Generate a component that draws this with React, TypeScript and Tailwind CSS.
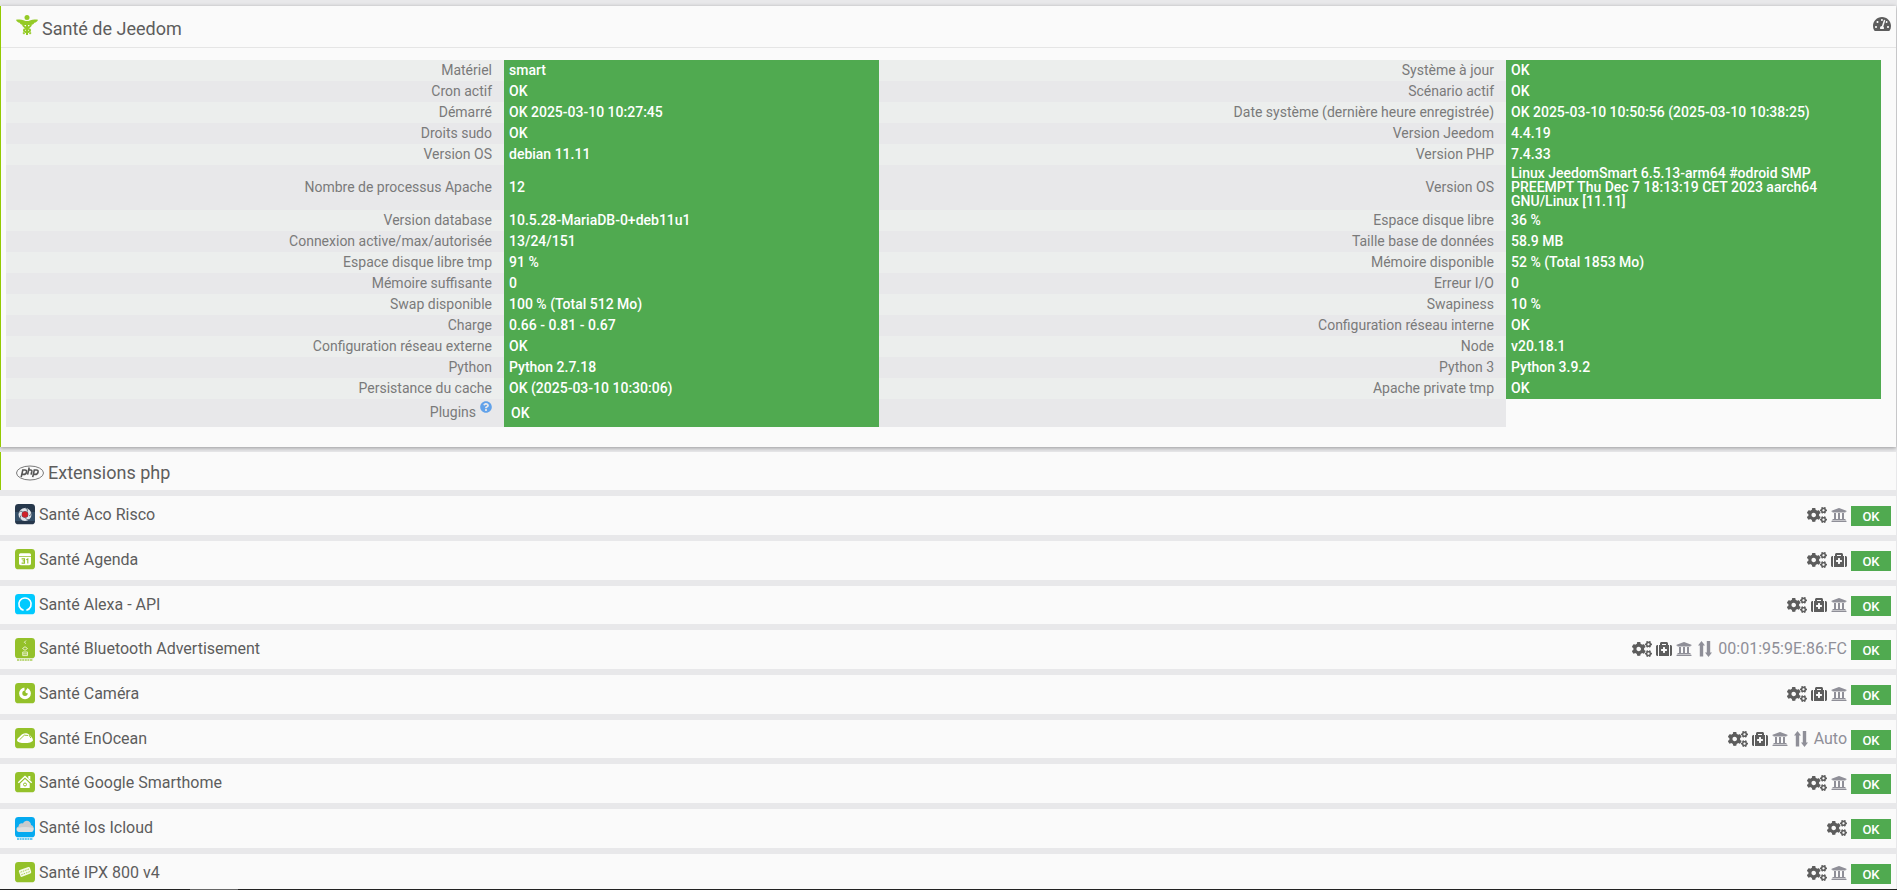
import type { ReactNode } from "react";
import { FaCogs, FaMedkit, FaUniversity, FaTachometerAlt, FaQuestionCircle } from "react-icons/fa";

type Cell = { label: string; value: string };

const checks: [Cell, Cell][] = [
  [{ label: "Matériel", value: "smart" }, { label: "Système à jour", value: "OK" }],
  [{ label: "Cron actif", value: "OK" }, { label: "Scénario actif", value: "OK" }],
  [
    { label: "Démarré", value: "OK 2025-03-10 10:27:45" },
    { label: "Date système (dernière heure enregistrée)", value: "OK 2025-03-10 10:50:56 (2025-03-10 10:38:25)" },
  ],
  [{ label: "Droits sudo", value: "OK" }, { label: "Version Jeedom", value: "4.4.19" }],
  [{ label: "Version OS", value: "debian 11.11" }, { label: "Version PHP", value: "7.4.33" }],
  [
    { label: "Nombre de processus Apache", value: "12" },
    {
      label: "Version OS",
      value: "Linux JeedomSmart 6.5.13-arm64 #odroid SMP PREEMPT Thu Dec 7 18:13:19 CET 2023 aarch64 GNU/Linux [11.11]",
    },
  ],
  [{ label: "Version database", value: "10.5.28-MariaDB-0+deb11u1" }, { label: "Espace disque libre", value: "36 %" }],
  [{ label: "Connexion active/max/autorisée", value: "13/24/151" }, { label: "Taille base de données", value: "58.9 MB" }],
  [{ label: "Espace disque libre tmp", value: "91 %" }, { label: "Mémoire disponible", value: "52 % (Total 1853 Mo)" }],
  [{ label: "Mémoire suffisante", value: "0" }, { label: "Erreur I/O", value: "0" }],
  [{ label: "Swap disponible", value: "100 % (Total 512 Mo)" }, { label: "Swapiness", value: "10 %" }],
  [{ label: "Charge", value: "0.66 - 0.81 - 0.67" }, { label: "Configuration réseau interne", value: "OK" }],
  [{ label: "Configuration réseau externe", value: "OK" }, { label: "Node", value: "v20.18.1" }],
  [{ label: "Python", value: "Python 2.7.18" }, { label: "Python 3", value: "Python 3.9.2" }],
  [{ label: "Persistance du cache", value: "OK (2025-03-10 10:30:06)" }, { label: "Apache private tmp", value: "OK" }],
];

function Caduceus() {
  return (
    <svg viewBox="0 0 22 20" className="h-5 w-[22px] shrink-0 fill-[#94ca26]" aria-hidden="true">
      <circle cx="11" cy="2.5" r="2.5" />
      <path d="M0 4.800c3-.6 5.500-.5 7.500.4L11 6.500l3.500-1.300c2-.9 4.500-1 7.500-.4-.6 1.700-2 2.800-3.600 3-.8 1.500-2.400 2.300-4.400 2.200H8C6 10.100 4.400 9.300 3.600 7.800 2 7.600.6 6.500 0 4.800z" />
      <path d="M10 6h2v14h-2z" />
      <path
        d="M7.200 9.500c-.6 3.800 6.800 3 6.800 5.700 0 1.500-1.600 2-4 2.300M14.800 9.500c.6 3.800-6.800 3-6.800 5.700 0 1.500 1.600 2 4 2.300"
        fill="none"
        stroke="#94ca26"
        strokeWidth="2"
      />
      <path d="M7 17.500l1.500 1.500M15 17.500L13.500 19" stroke="#94ca26" strokeWidth="1.500" />
    </svg>
  );
}

function PhpLogo() {
  return (
    <svg viewBox="0 0 28 16" className="h-4 w-7 shrink-0" aria-hidden="true">
      <ellipse cx="14" cy="8" rx="13.500" ry="7" fill="none" stroke="#6a6a6a" strokeWidth=".9" />
      <g fill="none" stroke="#555" strokeWidth="1.600">
        <path d="M5.200 12.200L6.800 5h2q2.200 0 1.700 2.200T7.700 9.400H6" />
        <path d="M13.200 2.500L11.600 9.600M12.700 5h1.900q1.500 0 1.200 1.500l-.7 3.100" />
        <path d="M16.700 12.200L18.300 5h2q2.200 0 1.700 2.200t-2.800 2.200H17.500" />
      </g>
    </svg>
  );
}

function Tile({ color, children, tag }: { color: string; children: ReactNode; tag?: string }) {
  return (
    <svg viewBox="0 0 20 24" className="h-6 w-5 shrink-0" aria-hidden="true">
      <rect width="20" height="20.300" rx="3.400" fill={color} />
      {children}
      {tag && <path d="M2 22h16" stroke={tag} strokeWidth="1.800" strokeDasharray="2 .6" opacity=".6" />}
    </svg>
  );
}

const GREEN = "#94c12a";

const tiles = {
  aco: (
    <Tile color="#26374b">
      <rect y="8" width="20" height="9" fill="#4a6d8c" opacity=".45" />
      <circle cx="10" cy="10.500" r="4.900" fill="none" stroke="#dfe3e8" strokeWidth="3.200" />
      <path
        d="M10 3.500q3 1 2.500 4M16.500 8q.5 3-2.500 4M14.500 15.500q-3 1.200-4-1.500M6 16q-2-2 0-4.500M3.500 9q1.500-3 4-1.500"
        fill="none"
        stroke="#4b5a6b"
        strokeWidth=".8"
      />
      <circle cx="10" cy="10.500" r="3" fill="#cf2229" />
    </Tile>
  ),
  agenda: (
    <Tile color={GREEN}>
      <path d="M4 7.200V5.800q0-1.500 1.500-1.500h9q1.500 0 1.500 1.500v1.400zM4 8h12v6.500q0 1.800-1.800 1.800H5.800Q4 16.300 4 14.500z" fill="#fff" />
      <path d="M6.600 9.900h2.900v2H7.600M9.500 11.900v2.200H6.600M11.300 10.700l1.500-.8v4.700" fill="none" stroke={GREEN} strokeWidth="1.100" />
    </Tile>
  ),
  alexa: (
    <Tile color="#00caff">
      <path d="M8.600 16.200A6.200 6.200 0 1 1 11.400 16.200" fill="none" stroke="#fff" strokeWidth="1.600" />
    </Tile>
  ),
  bluetooth: (
    <Tile color={GREEN} tag={GREEN}>
      <path
        d="M11 2.500L9.300 4.300 11 5.600M7.500 10.500L10 8.700l2.500 1.800-2.500 1.800zM7.700 14h4.800v3.600H7.700zM8 15.900h4.500"
        fill="none"
        stroke="#e4f0c4"
        strokeWidth="1"
      />
    </Tile>
  ),
  camera: (
    <Tile color={GREEN}>
      <circle cx="10" cy="10.300" r="4.300" fill="none" stroke="#fff" strokeWidth="3.200" />
      <path d="M9.800 10.300L9.300 3l4 .2z" fill={GREEN} />
      <circle cx="12.300" cy="8.400" r="1.900" fill="#fff" />
    </Tile>
  ),
  enocean: (
    <Tile color={GREEN}>
      <path d="M2 12.500C2 10.500 4 9.500 5.500 7.800 7.500 4.800 11.500 4.300 14 6.500c1.800 1.500 4 3.500 4 6-1 3.200-15 3.600-16 0z" fill="#fff" />
      <path d="M4.500 11.800l4.800-4.600 3.700.3M14 7l1.800 3" stroke={GREEN} strokeWidth=".9" fill="none" />
    </Tile>
  ),
  house: (
    <Tile color={GREEN}>
      <path d="M3.300 10.800L10 4.500l6.700 6.300" fill="none" stroke="#fff" strokeWidth="1.500" />
      <path d="M13.300 4h2v4l-2-1.500zM5.300 11.400L10 7l4.700 4.400v4.700H5.300z" fill="#fff" />
      <circle cx="10" cy="12.500" r="1.500" fill="none" stroke={GREEN} />
    </Tile>
  ),
  icloud: (
    <Tile color="#05aaf0" tag="#05aaf0">
      <path d="M4.500 15C.6 15 .6 10 3.600 9.500 3.600 6.500 6.500 5.600 8 6.500 9.600 2 16 3 16 8c3.800.8 3.500 7 0 7z" fill="#c9cbcd" />
      <path d="M4.500 15C2 15 1.500 12.500 2.500 11q7-2 16 0c.3 2-.5 4-2.500 4z" fill="#e6e7e8" opacity=".7" />
    </Tile>
  ),
  ipx: (
    <Tile color={GREEN}>
      <path d="M3.800 9.300q0-1 1-1.300l8.500-3q1.300-.3 1.600.8l1.300 4q.3 1.200-.8 1.700L7 14.800q-1.300.4-1.600-.8z" fill="#f6faea" />
      <path d="M5.500 10.200l8.500-3.200M6.300 12.800l8.500-3.200" stroke={GREEN} strokeWidth=".8" strokeDasharray="1.500 1" />
    </Tile>
  ),
};

type Plugin = { name: string; tile: keyof typeof tiles; medkit?: boolean; bank?: boolean; port?: string };

const plugins: Plugin[] = [
  { name: "Santé Aco Risco", tile: "aco", bank: true },
  { name: "Santé Agenda", tile: "agenda", medkit: true },
  { name: "Santé Alexa - API", tile: "alexa", medkit: true, bank: true },
  { name: "Santé Bluetooth Advertisement", tile: "bluetooth", medkit: true, bank: true, port: "00:01:95:9E:86:FC" },
  { name: "Santé Caméra", tile: "camera", medkit: true, bank: true },
  { name: "Santé EnOcean", tile: "enocean", medkit: true, bank: true, port: "Auto" },
  { name: "Santé Google Smarthome", tile: "house", bank: true },
  { name: "Santé Ios Icloud", tile: "icloud" },
  { name: "Santé IPX 800 v4", tile: "ipx", bank: true },
];

function PluginRow({ plugin }: { plugin: Plugin }) {
  return (
    <li className="flex h-[39px] items-start justify-between bg-[#fafafa] pr-[5px] pl-[15px] nth-[3n]:h-[38px]">
      <a href="#" className="flex items-start gap-1 pt-2 text-base leading-[22px]">
        {tiles[plugin.tile]}
        {plugin.name}
      </a>
      <div className="flex items-start gap-1 pt-[10px]">
        <div className="flex h-[18px] items-center gap-1">
          <a href="#" aria-label="Configuration"><FaCogs className="h-4 w-5" /></a>
          {plugin.medkit && <a href="#" aria-label="Santé"><FaMedkit className="size-4" /></a>}
          {plugin.bank && <FaUniversity className="size-4 text-[#8f8f98]" />}
          {plugin.port && (
            <span className="flex items-center gap-1.5 pl-0.5 text-base leading-5 text-[#8f8f98]">
              <svg viewBox="0 0 14 16" className="h-4 w-3.5 fill-current" aria-hidden="true">
                <path d="M3.500 0L7 4.500H5.200V15.500H1.800V4.500H0zM10.500 16L7 11.500h1.800V0h3.400v11.500H14z" />
              </svg>
              {plugin.port}
            </span>
          )}
        </div>
        <span className="h-5 w-10 bg-[#50aa50] text-center text-[13px] leading-[22px] font-medium text-white">OK</span>
      </div>
    </li>
  );
}

const labelCell = "pt-0 pr-3 pb-0.5 text-right font-normal";
const valueCell = "bg-[#50aa50] px-[5px] pt-0 pb-0.5 text-left font-medium text-white";

export default function App() {
  return (
    <div className="flex h-screen flex-col bg-[#e8e8ea] font-[Roboto,sans-serif] text-[#5d5d5d]">
      <main className="min-h-0 flex-1 overflow-hidden pt-1.5 pr-px">
        <section className="border-l border-[#94ca02] bg-[#fafafa] pb-5 shadow-[0_1px_4px_rgba(0,0,0,0.35)]">
          <header className="flex h-[42px] items-start justify-between border-b border-[#e5e5e5] pt-[9px] pr-[5px] pl-[15px]">
            <h1 className="flex items-start gap-1 text-lg leading-7">
              <Caduceus />
              Santé de Jeedom
            </h1>
            <a href="#" aria-label="Tableau de bord"><FaTachometerAlt className="size-[18px]" /></a>
          </header>
          <div className="pt-3 pr-[15px] pl-[5px]">
            <table className="w-full table-fixed border-collapse text-sm leading-[14px] text-[#7a7a7a]">
              <colgroup>
                <col className="w-[26.56%]" />
                <col className="w-[20%]" />
                <col />
                <col className="w-[20%]" />
              </colgroup>
              <tbody>
                {checks.map((pair) => (
                  <tr key={pair[0].label} className="h-[21px] odd:bg-[#eceeed] even:bg-[#e8e8ea] nth-[6]:h-[45px]">
                    {pair.flatMap((cell, i) => [
                      <th key={`l${i}`} scope="row" className={labelCell}>{cell.label}</th>,
                      <td key={`v${i}`} className={valueCell}>{cell.value}</td>,
                    ])}
                  </tr>
                ))}
                <tr className="h-7">
                  <th scope="row" className="bg-[#e8e8ea] pt-0 pr-3 pb-0.5 text-right font-normal">
                    <span className="inline-flex items-start gap-1">
                      Plugins
                      <FaQuestionCircle className="-mt-1 size-3 text-[#62a2ea]" />
                    </span>
                  </th>
                  <td className="bg-[#50aa50] px-[7px] font-medium text-white">OK</td>
                  <td className="bg-[#e8e8ea]" />
                  <td />
                </tr>
              </tbody>
            </table>
          </div>
        </section>
        <section className="mt-[5px] border-l border-[#94ca02] bg-[#fafafa]">
          <h2 className="flex h-[38px] items-center gap-1 pt-1 pl-[15px] text-lg leading-7">
            <PhpLogo />
            Extensions php
          </h2>
        </section>
        <ul className="flex flex-col gap-1.5 pt-1.5">
          {plugins.map((plugin) => (
            <PluginRow key={plugin.name} plugin={plugin} />
          ))}
        </ul>
      </main>
      <div className="h-px shrink-0 bg-[#222] pl-[10%]">
        <div className="h-px w-12 bg-[#666]" />
      </div>
    </div>
  );
}
